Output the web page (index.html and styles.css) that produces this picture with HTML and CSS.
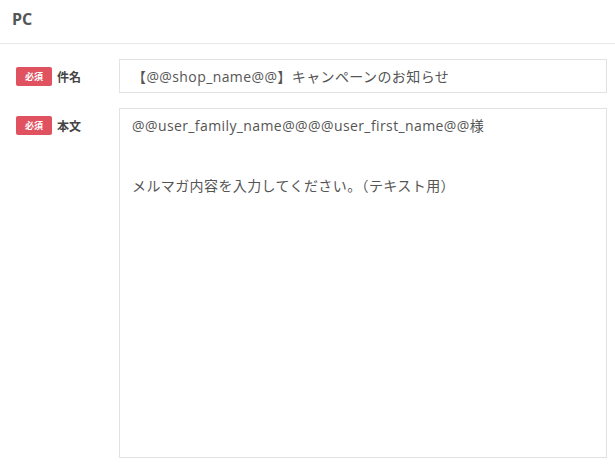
FILE: index.html
```html
<!DOCTYPE html>
<html lang="ja">
<head>
<meta charset="utf-8">
<title>PC</title>
<link rel="stylesheet" href="styles.css">
</head>
<body>
<div class="panel">
  <div class="panel-head">PC</div>
  <div class="panel-body">
    <div class="row">
      <div class="label"><span class="badge">必須</span><span class="label-text">件名</span></div>
      <div class="field field-input">【@@shop_name@@】キャンペーンのお知らせ</div>
    </div>
    <div class="row">
      <div class="label"><span class="badge">必須</span><span class="label-text">本文</span></div>
      <div class="field field-area">@@user_family_name@@@@user_first_name@@様<br><br><br>メルマガ内容を入力してください。（テキスト用）</div>
    </div>
  </div>
</div>
</body>
</html>
```
FILE: styles.css
```css
html, body {
  margin: 0;
  padding: 0;
  background: #fff;
}
body {
  font-family: "Open Sans", "Noto Sans CJK JP", sans-serif;
  color: #555;
}
.panel-head {
  height: 44px;
  box-sizing: border-box;
  padding: 8px 12px 0;
  font-size: 16px;
  font-weight: bold;
  color: #555;
  border-bottom: 1px solid #e8e8e8;
}
.panel-body {
  padding: 15px 8px 10px 16px;
  display: flex;
  flex-direction: column;
  gap: 15px;
}
.row {
  display: flex;
  align-items: flex-start;
}
.label {
  width: 103px;
  flex: none;
  display: flex;
  align-items: center;
  gap: 5px;
  padding-top: 8px;
}
.badge {
  display: inline-flex;
  align-items: center;
  justify-content: center;
  width: 36px;
  height: 19px;
  border-radius: 2px;
  background: #e0525f;
  color: #fff;
  font-size: 9px;
  font-weight: bold;
  font-family: "Noto Sans CJK JP", sans-serif;
}
.label-text {
  font-size: 12px;
  font-weight: bold;
  color: #444;
  font-family: "Noto Sans CJK JP", sans-serif;
}
.field {
  flex: 1;
  box-sizing: border-box;
  border: 1px solid #e2e2e2;
  font-size: 14px;
  line-height: 20px;
  letter-spacing: 0.4px;
  padding: 0 12px;
  color: #555;
}
.field-input {
  height: 34px;
  padding-top: 7px;
}
.field-area {
  height: 350px;
  padding-top: 7px;
}
```
